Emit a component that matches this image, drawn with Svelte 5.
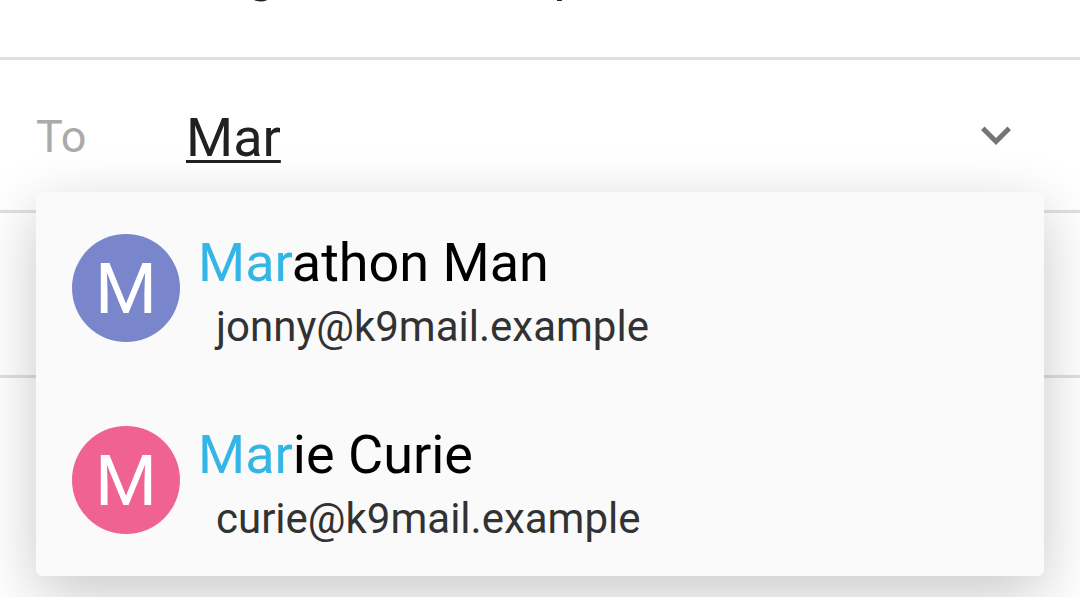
<script>
  const contacts = [
    { name: 'Marathon Man', email: 'jonny@k9mail.example', color: '#7986cb' },
    { name: 'Marie Curie', email: 'curie@k9mail.example', color: '#f06292' }
  ];

  let query = $state('Mar');
</script>

<main class="compose">
  <div class="field from">
    <span class="sender">Eugenius Example</span>
  </div>

  <div class="field to">
    <label for="recipient">To</label>
    <input id="recipient" type="text" autocomplete="off" spellcheck="false" bind:value={query} />
    <button class="expand" type="button" aria-label="Show Cc and Bcc">
      <svg viewBox="0 0 24 24" aria-hidden="true">
        <path d="M7.41 8.59 12 13.17l4.59-4.58L18 10l-6 6-6-6z" fill="#757575" />
      </svg>
    </button>

    <ul class="suggestions">
      {#each contacts as contact}
        <li>
          <button class="contact" type="button">
            <span class="avatar" style:background={contact.color}>{contact.name[0]}</span>
            <span class="details">
              <span class="name"><span class="match">{contact.name.slice(0, 3)}</span>{contact.name.slice(3)}</span>
              <span class="email">{contact.email}</span>
            </span>
          </button>
        </li>
      {/each}
    </ul>
  </div>

  <div class="field subject"></div>
</main>

<style>
  :global(body) {
    margin: 0;
    background: #fff;
  }

  .compose {
    display: flow-root;
    box-sizing: border-box;
    min-height: 100vh;
    overflow: hidden;
    font-family: Roboto, sans-serif;
    color: #212121;
  }

  .field {
    display: flex;
    align-items: center;
    box-sizing: border-box;
    border-bottom: 3px solid #e0e0e0;
  }

  .from {
    height: 165px;
    margin-top: -105px;
    padding: 0 36px 8px 186px;
  }

  .sender {
    font-size: 54px;
    line-height: 64px;
    white-space: nowrap;
  }

  .to {
    position: relative;
    height: 153px;
    padding: 0 54px 0 36px;
  }

  label {
    flex: 0 0 150px;
    padding-top: 4px;
    font-size: 45px;
    line-height: 64px;
    color: #aaa;
  }

  input {
    flex: 1;
    min-width: 0;
    height: 64px;
    padding: 6px 0 0;
    border: 0;
    outline: 0;
    background: none;
    font: 54px/64px Roboto, sans-serif;
    color: #212121;
    text-decoration: underline;
    text-decoration-thickness: 3px;
    text-underline-offset: 4px;
  }

  button {
    border: 0;
    padding: 0;
    background: none;
    font-family: inherit;
    cursor: pointer;
  }

  .expand svg {
    display: block;
    width: 60px;
    height: 60px;
  }

  .suggestions {
    position: absolute;
    top: 132px;
    left: 36px;
    right: 36px;
    z-index: 1;
    margin: 0;
    padding: 0;
    list-style: none;
    border-radius: 6px;
    background: #fafafa;
    box-shadow: 0 18px 60px rgba(0, 0, 0, 0.22);
  }

  .contact {
    display: flex;
    align-items: center;
    gap: 18px;
    width: 100%;
    height: 192px;
    padding: 0 36px;
    text-align: left;
  }

  .avatar {
    flex: none;
    width: 108px;
    height: 108px;
    border-radius: 50%;
    font-size: 71px;
    line-height: 110px;
    text-align: center;
    color: #fff;
  }

  .details {
    display: flex;
    flex-direction: column;
    gap: 8px;
    padding-top: 6px;
    white-space: nowrap;
  }

  .name {
    font-size: 54px;
    line-height: 64px;
    color: #000;
  }

  .match {
    color: #33b5e5;
  }

  .email {
    padding-left: 18px;
    font-size: 42px;
    line-height: 48px;
    color: #323232;
  }

  .subject {
    height: 165px;
  }
</style>
